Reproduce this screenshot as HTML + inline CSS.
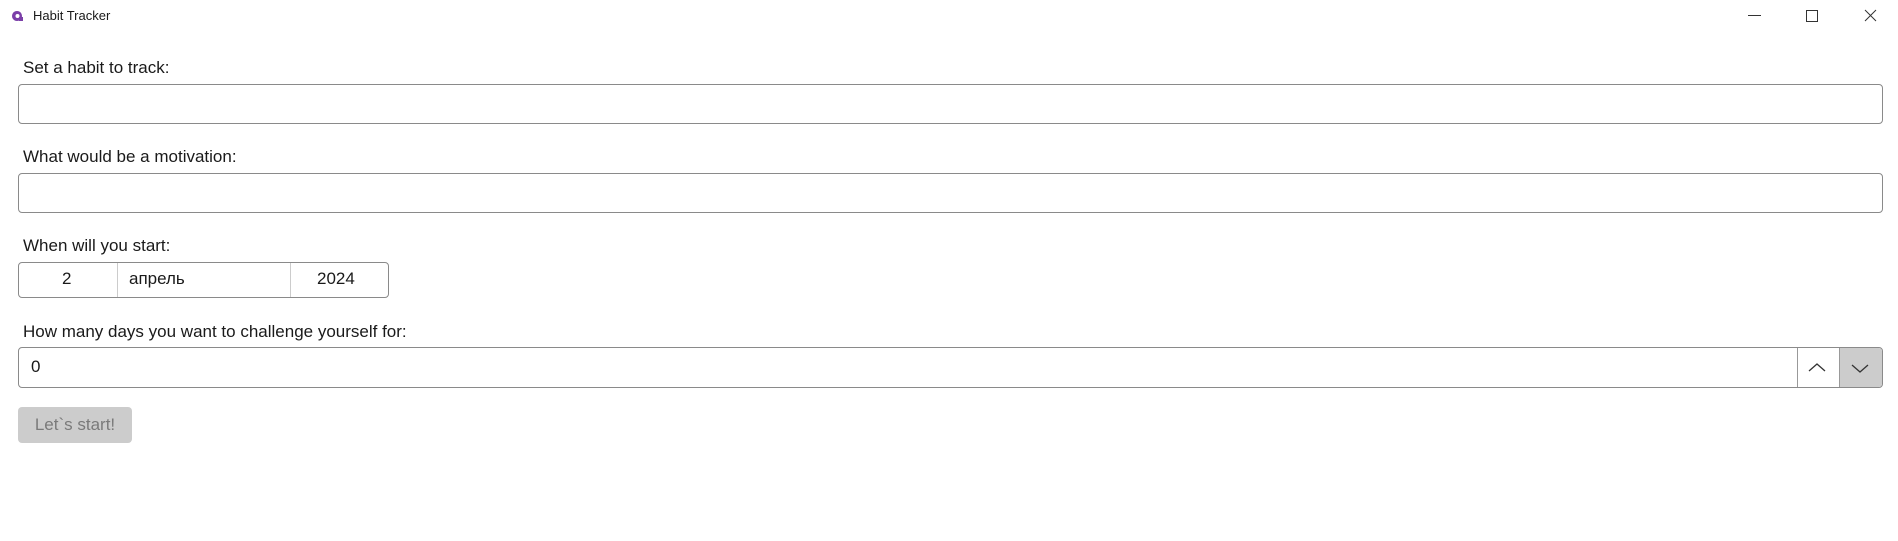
<!DOCTYPE html>
<html><head><meta charset="utf-8"><style>
body{margin:0;width:1898px;height:541px;background:#fff;font-family:"Liberation Sans",sans-serif;color:#1a1a1a;position:relative;overflow:hidden}
.a{position:absolute}
.lbl{font-size:17px;left:23px}
.box{border:1px solid #8a8a8a;border-radius:4px;box-sizing:border-box;background:#fff}
</style></head><body>
<svg class="a" style="left:11px;top:10px" width="13" height="12" viewBox="0 0 13 12"><path d="M6 1a5 5 0 1 0 0.01 0z" fill="#7b3fa8"/><circle cx="6.5" cy="6" r="2" fill="#fff"/><rect x="8" y="7" width="4" height="4" fill="#7b3fa8"/></svg>
<div class="a" style="left:33px;top:8px;font-size:13px">Habit Tracker</div>
<svg class="a" style="left:1740px;top:6px" width="150" height="20"><line x1="8" y1="9.5" x2="21" y2="9.5" stroke="#333"/><rect x="66.5" y="4.5" width="11" height="11" fill="none" stroke="#333"/><path d="M125 4l11 11M136 4l-11 11" stroke="#333" fill="none"/></svg>
<div class="a lbl" style="top:58px">Set a habit to track:</div>
<div class="a box" style="left:18px;top:84px;width:1865px;height:40px"></div>
<div class="a lbl" style="top:147px">What would be a motivation:</div>
<div class="a box" style="left:18px;top:173px;width:1865px;height:40px"></div>
<div class="a lbl" style="top:236px">When will you start:</div>
<div class="a box" style="left:18px;top:262px;width:371px;height:36px"></div>
<div class="a" style="left:117px;top:263px;width:1px;height:34px;background:#ccc"></div>
<div class="a" style="left:290px;top:263px;width:1px;height:34px;background:#ccc"></div>
<div class="a" style="left:62px;top:269px;font-size:17px">2</div>
<div class="a" style="left:129px;top:269px;font-size:17px">апрель</div>
<div class="a" style="left:317px;top:269px;font-size:17px">2024</div>
<div class="a lbl" style="top:322px">How many days you want to challenge yourself for:</div>
<div class="a box" style="left:18px;top:347px;width:1865px;height:41px;overflow:hidden">
<div class="a" style="left:1778px;top:0;width:1px;height:40px;background:#999"></div>
<div class="a" style="left:1820px;top:0;width:45px;height:40px;background:#ccc;border-left:1px solid #999"></div>
</div>
<div class="a" style="left:31px;top:357px;font-size:17px">0</div>
<svg class="a" style="left:1796px;top:348px" width="86" height="39"><path d="M13 23l8-7 8 7" fill="none" stroke="#333" stroke-width="1.3"/><path d="M56 17l8 7 8-7" fill="none" stroke="#333" stroke-width="1.3"/></svg>
<div class="a" style="left:18px;top:407px;width:114px;height:36px;background:#ccc;border-radius:4px;color:#7a7a7a;font-size:17px;line-height:36px;text-align:center">Let`s start!</div>
</body></html>
